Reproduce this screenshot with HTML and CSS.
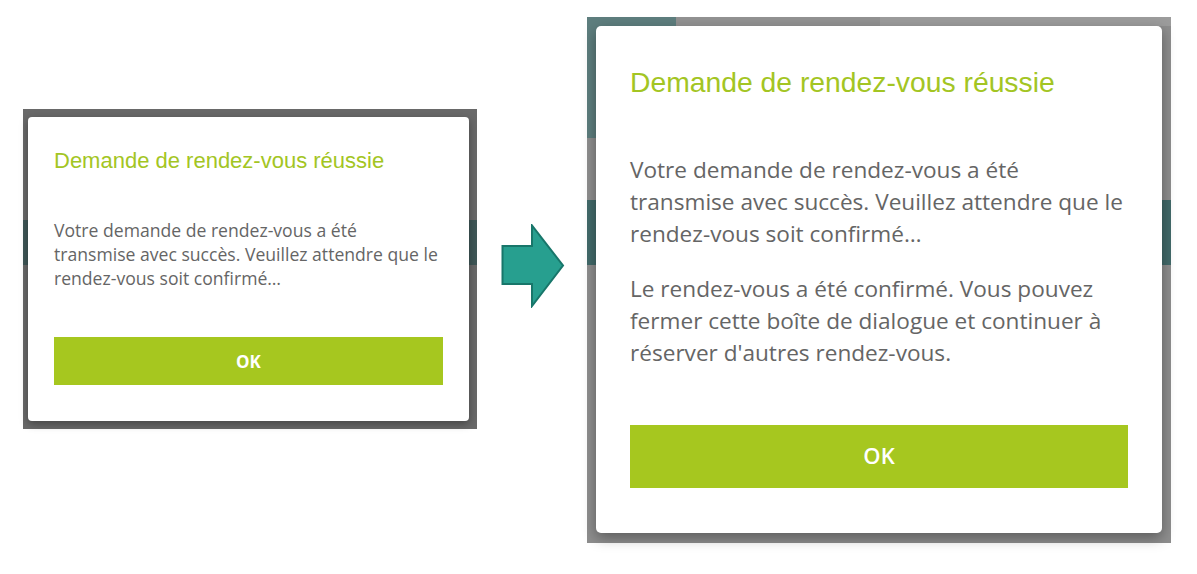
FILE: index.html
```html
<!DOCTYPE html>
<html lang="fr">
<head>
<meta charset="utf-8">
<title>Demande de rendez-vous réussie</title>
<link rel="stylesheet" href="styles.css">
</head>
<body>
<div class="canvas">
  <div class="shot shot-small">
    <div class="dialog dialog-small">
      <h2 class="title">Demande de rendez-vous réussie</h2>
      <div class="body">
        <p class="para">Votre demande de rendez-vous a été<br>transmise avec succès. Veuillez attendre que le<br>rendez-vous soit confirmé…</p>
      </div>
      <div class="btn">OK</div>
    </div>
  </div>

  <svg class="arrow" viewBox="0 0 64 84" width="64" height="84">
    <polygon points="1.5,22 31,22 31,1.5 62,41.5 31,82 31,60 1.5,60" fill="#279f8f" stroke="#18766a" stroke-width="2" stroke-linejoin="miter"/>
  </svg>

  <div class="shot shot-large">
    <div class="dialog dialog-large">
      <h2 class="title">Demande de rendez-vous réussie</h2>
      <div class="body">
        <p class="para">Votre demande de rendez-vous a été<br>transmise avec succès. Veuillez attendre que le<br>rendez-vous soit confirmé…</p>
        <p class="para para-2">Le rendez-vous a été confirmé. Vous pouvez<br>fermer cette boîte de dialogue et continuer à<br>réserver d'autres rendez-vous.</p>
      </div>
      <div class="btn">OK</div>
    </div>
  </div>
</div>
</body>
</html>
```

FILE: styles.css
```css
html, body {
  margin: 0;
  padding: 0;
  background: #ffffff;
}

body {
  width: 1197px;
  height: 574px;
  overflow: hidden;
  font-family: "Open Sans", "Liberation Sans", sans-serif;
}

.canvas {
  display: flex;
  align-items: flex-start;
}

.shot {
  flex: none;
}

.shot-small {
  margin-left: 23px;
  margin-top: 109px;
  padding: 8px 8px 8px 5px;
  background:
    linear-gradient(to bottom, transparent 111px, #3f5757 111px, #3f5757 156px, transparent 156px),
    #696969;
}

.shot-large {
  margin-left: 22px;
  margin-top: 17px;
  padding: 9px 9px 10px 9px;
  background:
    linear-gradient(to bottom, transparent 183px, #426a6a 183px, #426a6a 248px, transparent 248px),
    linear-gradient(#5e7e7e, #5e7e7e),
    linear-gradient(to bottom, transparent 52px, #bdbdbd 52px, #bdbdbd 53px, transparent 53px),
    linear-gradient(to right, #929292 0, #929292 293px, #9c9c9c 293px),
    #8e8e8e;
  background-size: auto, 89px 121px, 89px 121px, 100% 9px, auto;
  background-repeat: no-repeat;
}

.dialog {
  background: #ffffff;
  box-sizing: border-box;
}

.dialog-small {
  width: 441px;
  height: 304px;
  padding: 31px 26px 36px;
  border-radius: 4px;
  box-shadow: 0 3px 8px rgba(0, 0, 0, 0.35);
}

.dialog-large {
  width: 566px;
  height: 507px;
  padding: 40px 34px 45px;
  border-radius: 5px;
  box-shadow: 0 5px 14px rgba(0, 0, 0, 0.35);
}

.title {
  margin: 0;
  font-family: "Liberation Sans", Arial, sans-serif;
  font-weight: normal;
  color: #a3c523;
  white-space: nowrap;
}

.dialog-small .title {
  font-size: 22px;
  line-height: 26px;
}

.dialog-large .title {
  font-size: 28.3px;
  line-height: 33px;
}

.para {
  margin: 0;
  color: #656565;
  white-space: nowrap;
}

.dialog-small .body {
  margin-top: 44px;
}

.dialog-small .para {
  font-size: 17.6px;
  line-height: 24px;
}

.dialog-large .body {
  margin-top: 55px;
}

.dialog-large .para {
  font-size: 22.6px;
  line-height: 32px;
}

.dialog-large .para-2 {
  margin-top: 23px;
}

.btn {
  display: flex;
  align-items: center;
  justify-content: center;
  box-sizing: border-box;
  background: #a6c71f;
  color: #ffffff;
}

.dialog-small .btn {
  margin-top: 47px;
  height: 48px;
  font-size: 17px;
  font-weight: 700;
}

.dialog-large .btn {
  margin-top: 56px;
  height: 63px;
  padding-bottom: 3px;
  font-size: 22px;
  font-weight: 600;
}

.arrow {
  flex: none;
  display: block;
  margin-left: 24px;
  margin-top: 224px;
}
```
